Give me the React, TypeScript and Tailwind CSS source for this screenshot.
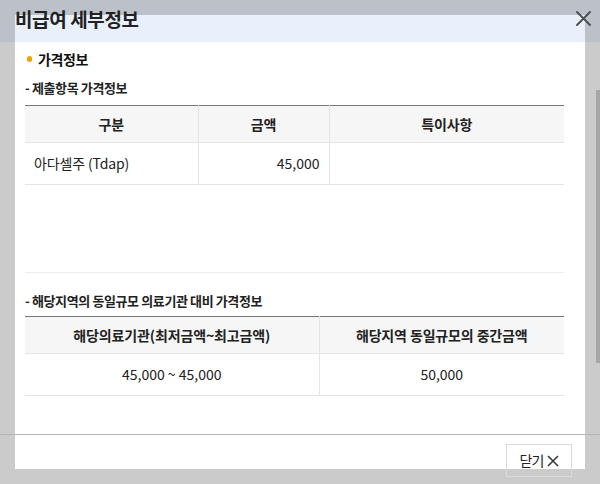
import React from 'react';

const font = { fontFamily: '"Noto Sans CJK KR", "Noto Sans", sans-serif' };

const SubTitle: React.FC<{ text: string }> = ({ text }) => (
  <div className="text-[13px] font-bold text-[#222] tracking-[-0.03em] leading-[18px]">- {text}</div>
);

export default function App() {
  return (
    <div className="relative w-[600px] h-[484px] overflow-hidden bg-[#cbcbcb]" style={font}>
      {/* dialog header band */}
      <div className="h-[42px] bg-[#bcc1c9]" />

      {/* dialog body */}
      <div className="absolute left-[15px] top-[15px] w-[570px] h-[454px] bg-white flex flex-col">
        <div className="h-[27px] bg-[#e9f0fc]" />
        <div className="px-[10px] pt-[7px]">
          <div className="flex items-center gap-[6px] pl-[2px]">
            <span className="w-[5px] h-[6px] rounded-full bg-[#f5a200]" />
            <span className="text-[14px] font-bold text-[#111] tracking-[-0.03em] leading-[20px]">가격정보</span>
          </div>

          <div className="mt-[10px]">
            <SubTitle text="제출항목 가격정보" />
          </div>

          <table className="mt-[8px] w-[539px] border-t border-[#777] text-[14px] text-[#222] tracking-[-0.01em] table-fixed border-collapse">
            <colgroup>
              <col className="w-[173px]" />
              <col className="w-[131px]" />
              <col />
            </colgroup>
            <thead>
              <tr className="h-[37px] bg-[#f6f6f6] border-b border-[#e4e4e4]">
                <th className="font-bold text-center border-r border-[#e4e4e4]">구분</th>
                <th className="font-bold text-center border-r border-[#e4e4e4]">금액</th>
                <th className="font-bold text-center">특이사항</th>
              </tr>
            </thead>
            <tbody>
              <tr className="h-[42px] border-b border-[#e4e4e4]">
                <td className="pl-[9px] border-r border-[#e4e4e4]">아다셀주 (Tdap)</td>
                <td className="pr-[9px] text-right border-r border-[#e4e4e4] tracking-normal">45,000</td>
                <td />
              </tr>
            </tbody>
          </table>

          <div className="w-[539px] h-[88px] border-b border-[#ececec]" />

          <div className="mt-[19px]">
            <SubTitle text="해당지역의 동일규모 의료기관 대비 가격정보" />
          </div>

          <table className="mt-[6px] w-[539px] border-t border-[#777] text-[14px] text-[#222] tracking-[-0.01em] table-fixed border-collapse">
            <colgroup>
              <col className="w-[294px]" />
              <col />
            </colgroup>
            <thead>
              <tr className="h-[37px] bg-[#f6f6f6] border-b border-[#e4e4e4]">
                <th className="font-bold text-center border-r border-[#e4e4e4]">해당의료기관(최저금액~최고금액)</th>
                <th className="font-bold text-center">해당지역 동일규모의 중간금액</th>
              </tr>
            </thead>
            <tbody>
              <tr className="h-[42px] border-b border-[#e4e4e4]">
                <td className="text-center border-r border-[#e4e4e4] tracking-normal">45,000 ~ 45,000</td>
                <td className="text-center tracking-normal">50,000</td>
              </tr>
            </tbody>
          </table>
        </div>
      </div>

      {/* title over header */}
      <div className="absolute left-[15px] top-[5px] text-[19px] font-bold text-[#222] leading-[28px] tracking-[-0.02em]">
        비급여 세부정보
      </div>

      {/* close icon */}
      <svg className="absolute left-[576px] top-[11px]" width="15" height="15" viewBox="0 0 15 15">
        <path d="M1 1 L14 14 M14 1 L1 14" stroke="#4a4d52" strokeWidth="1.8" strokeLinecap="round" />
      </svg>

      {/* scrollbar thumb */}
      <div className="absolute left-[596px] top-[90px] w-[4px] h-[273px] bg-[#a6a6a6]" />

      {/* footer divider */}
      <div className="absolute left-0 top-[434px] w-[600px] h-[1px] bg-[#b5b5b5]" />

      {/* close button */}
      <button className="absolute left-[506px] top-[444px] w-[66px] h-[33px] border border-[#dadada] flex items-center justify-center gap-[3px] text-[14px] text-[#222]">
        <span className="tracking-[-0.06em]">닫기</span>
        <svg width="12" height="12" viewBox="0 0 12 12">
          <path d="M1 1 L11 11 M11 1 L1 11" stroke="#333" strokeWidth="1.5" />
        </svg>
      </button>
    </div>
  );
}
